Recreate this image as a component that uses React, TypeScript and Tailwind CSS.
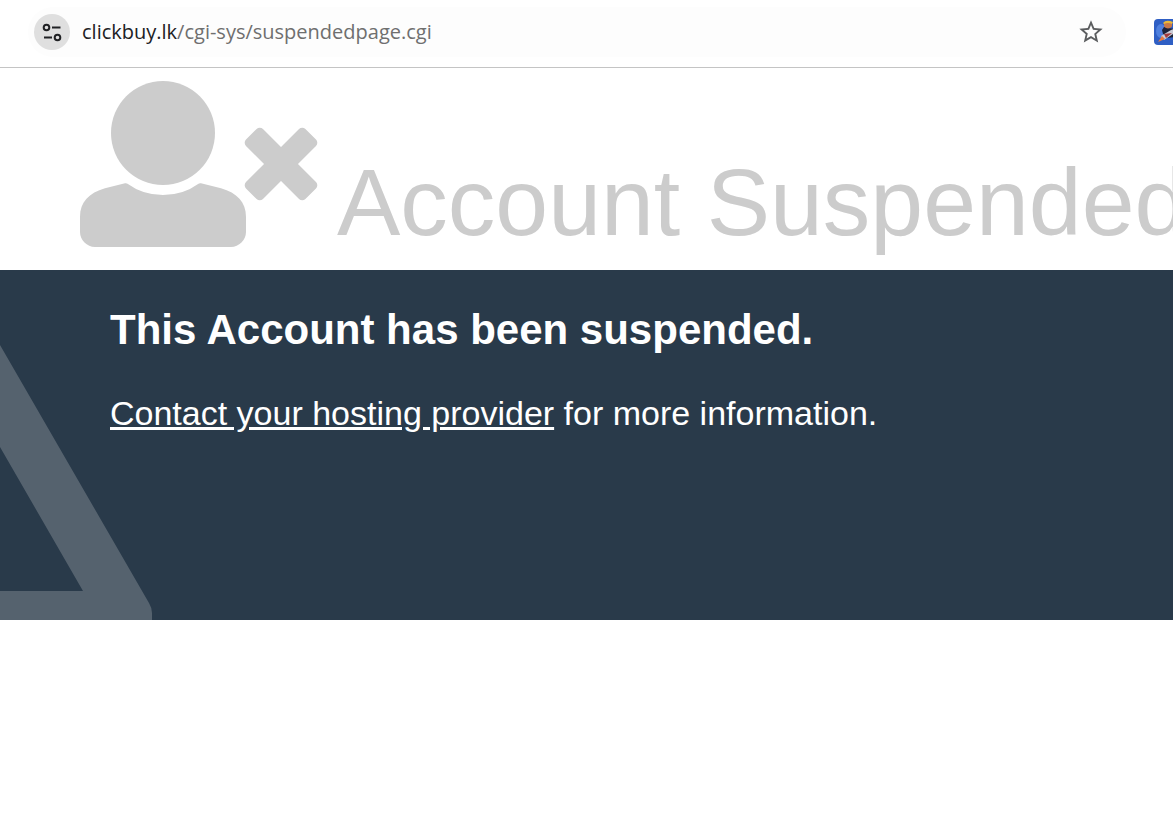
import { MdStarBorder } from "react-icons/md";

function TuneIcon() {
  return (
    <svg width="36" height="36" viewBox="0 0 36 36" fill="none" stroke="#202124" strokeWidth="2" aria-hidden="true">
      <circle cx="12.5" cy="13.5" r="2.8" />
      <path d="M18 13.500H26.500M10 23.500H18" />
      <circle cx="23.500" cy="23.500" r="2.8" />
    </svg>
  );
}

function ExtensionIcon() {
  return (
    <svg width="26" height="26" viewBox="0 0 26 26" aria-hidden="true">
      <rect width="26" height="26" rx="4" fill="#2f5fc4" />
      <ellipse cx="7" cy="12" rx="5" ry="7" fill="#4f80de" />
      <path d="M8 11l2-3 4 1 6 1v8l-7 1-4-4z" fill="#1c2238" />
      <path d="M10 3.500q4-2.500 8 0v4q-4 4-8 0z" fill="#c87848" />
      <path d="M9 4q3-4 10-1l-1 2q-4-2-8 0z" fill="#e8b838" />
      <path d="M7 17L17 11l5-2-3 6-9 6z" fill="#c9cbd6" />
      <path d="M10 15l8-1-6 5z" fill="#a33a3a" />
      <path d="M4 23l4-6 3 3z" fill="#e87a3e" />
    </svg>
  );
}

function UserTimesIcon() {
  return (
    <svg className="shrink-0" width="240" height="168" viewBox="0 0 240 168" fill="#ccc" aria-hidden="true">
      <circle cx="84" cy="53" r="52" />
      <path d="M46 103.300q1.500-.4 2.500.4Q64 115 84 115t35.500-11.300q1-.8 2.500-.4l20 5C158 113 167 122 167 137v15C167 160 160 167 152 167H16C8 167 1 160 1 152v-15c0-15 9-24 25-28.700z" />
      <g transform="rotate(45 202 84)">
        <rect x="160" y="72" width="84" height="24" rx="4.500" />
        <rect x="190" y="42" width="24" height="84" rx="4.500" />
      </g>
    </svg>
  );
}

export default function App() {
  return (
    <div className="min-h-screen overflow-hidden bg-white font-['Liberation_Sans',Arial,sans-serif]">
      <div className="flex h-17 items-center gap-7 overflow-hidden border-b border-[#c4c4c4] pb-[3px] pl-7">
        <div className="flex h-[50px] min-w-0 flex-1 items-center rounded-full bg-[#fdfdfd] pr-[21px] pl-[6px]">
          <button type="button" aria-label="View site information" className="size-9 shrink-0 rounded-full bg-[#dfdfdf]">
            <TuneIcon />
          </button>
          <div className="ml-3 min-w-0 flex-1 truncate font-['Open_Sans','Noto_Sans',sans-serif] text-[20px] leading-7 text-[#6f6f6f]">
            <span className="text-[#202124]">clickbuy.lk</span>/cgi-sys/suspendedpage.cgi
          </div>
          <button type="button" aria-label="Bookmark this tab" className="shrink-0 text-[#5b5d5f]">
            <MdStarBorder size={28} />
          </button>
        </div>
        <button type="button" aria-label="Extension" className="-mr-[7px] shrink-0">
          <ExtensionIcon />
        </button>
      </div>

      <header className="flex items-start overflow-hidden pt-3 pb-[22px] pl-[79px] text-[#ccc]">
        <UserTimesIcon />
        <h1 className="mt-[67px] ml-[18px] h-[101px] text-[95px] leading-[110px] whitespace-nowrap">Account Suspended</h1>
      </header>

      <section className="relative h-[350px] overflow-hidden bg-[#293a4a] px-[110px] pt-9 text-white">
        <svg className="absolute bottom-0 left-0" width="152" height="276" viewBox="0 0 152 276" fill="#55626e" aria-hidden="true">
          <path d="M0 1L149 259q3 5 3 10v7H0V247H83L0 103z" />
        </svg>
        <h2 className="relative text-[42px] leading-12 font-bold">This Account has been suspended.</h2>
        <p className="relative mt-[39px] text-[34px] leading-10">
          <a href="#contact" className="underline">Contact your hosting provider</a> for more information.
        </p>
      </section>
    </div>
  );
}
